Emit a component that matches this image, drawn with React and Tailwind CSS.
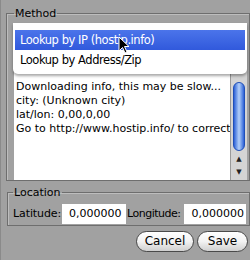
const lines = [
  "Downloading info, this may be slow...",
  "city: (Unknown city)",
  "lat/lon: 0,00,0,00",
  "Go to http://www.hostip.info/ to correct",
];

function Cursor() {
  return (
    <svg
      className="absolute left-[117px] top-[36px]"
      width="13"
      height="19"
      viewBox="0 0 13 19"
    >
      <path
        d="M1 1 L1 15 L4.5 11.5 L7 17 L9 16 L6.5 10.5 L11 10.5 Z"
        fill="#000"
        stroke="#fff"
        strokeWidth="1"
        strokeLinejoin="round"
      />
    </svg>
  );
}

export default function App() {
  return (
    <div className="relative w-[250px] h-[260px] overflow-hidden bg-[#a1a1a1] font-['DejaVu_Sans',sans-serif] text-[11px] text-black border-l border-[#8a8a8a]">
      <fieldset className="ml-[5px] mt-[7px] w-[244px] h-[174px] border border-[#6e6e6e] shadow-[inset_1px_1px_0_#bdbdbd] pl-[7px] pr-[1px] pt-[33px] pb-[4px]">
        <legend className="px-[1px] leading-[13px] text-[11px]">Method</legend>
        <div className="flex h-[127px]">
          <div className="w-[216px] bg-white border-t border-[#7c7c7c] pl-[2px] pt-[26px] leading-[14px] text-[11px] whitespace-nowrap overflow-hidden">
            {lines.map((l) => (
              <div key={l}>{l}</div>
            ))}
          </div>
          <div className="w-[17px] bg-[#d4d4d4] border-l border-[#9a9a9a] flex flex-col items-center pt-[29px]">
            <div className="w-[12px] h-[69px] rounded-full border border-[#1f4fb8] bg-gradient-to-r from-[#2e60d6] via-[#b5d0f8] to-[#2e60d6]" />
            <div className="mt-[4px] text-[7px] leading-[9px] text-[#222]">▲</div>
            <div className="mt-[4px] text-[7px] leading-[9px] text-[#222]">▼</div>
          </div>
        </div>
      </fieldset>

      <fieldset className="ml-[6px] mt-[5px] w-[243px] h-[40px] border border-[#6e6e6e] shadow-[inset_1px_1px_0_#bdbdbd] pl-[5px] pr-[1px] pt-[5px]">
        <legend className="px-[1px] leading-[13px] text-[11px]">Location</legend>
        <div className="flex items-center whitespace-nowrap">
          <span className="text-[11px] tracking-[-0.1px]">Latitude:</span>
          <div className="ml-[1px] w-[64px] h-[20px] bg-white pl-[7px] leading-[20px] text-[11px]">
            0,000000
          </div>
          <span className="ml-[1px] text-[11px] tracking-[-0.5px]">Longitude:</span>
          <div className="ml-[3px] w-[62px] h-[20px] bg-white pl-[8px] leading-[20px] text-[11px]">
            0,000000
          </div>
        </div>
      </fieldset>

      <div className="flex justify-end gap-[3px] pr-[2px] mt-[5px]">
        <button className="w-[58px] h-[21px] rounded-full border border-[#4a4a4a] bg-gradient-to-b from-white via-[#f2f2f2] to-[#cfcfcf] text-[12px] leading-[19px]">
          Cancel
        </button>
        <button className="w-[51px] h-[21px] rounded-full border border-[#4a4a4a] bg-gradient-to-b from-white via-[#f2f2f2] to-[#cfcfcf] text-[12px] leading-[19px]">
          Save
        </button>
      </div>

      <div className="absolute left-[12px] top-[23px] w-[234px] h-[51px] bg-white rounded-b-[5px] shadow-[0_2px_3px_rgba(0,0,0,0.35)] pt-[7px] px-[2px]">
        <div className="h-[20px] bg-gradient-to-b from-[#4b74ea] to-[#3159dc] text-white pl-[5px] leading-[20px] text-[11.5px] tracking-[-0.45px]">
          Lookup by IP (hostip.info)
        </div>
        <div className="h-[20px] pl-[5px] leading-[20px] text-[11.5px] tracking-[-0.45px]">
          Lookup by Address/Zip
        </div>
      </div>
      <Cursor />
    </div>
  );
}
